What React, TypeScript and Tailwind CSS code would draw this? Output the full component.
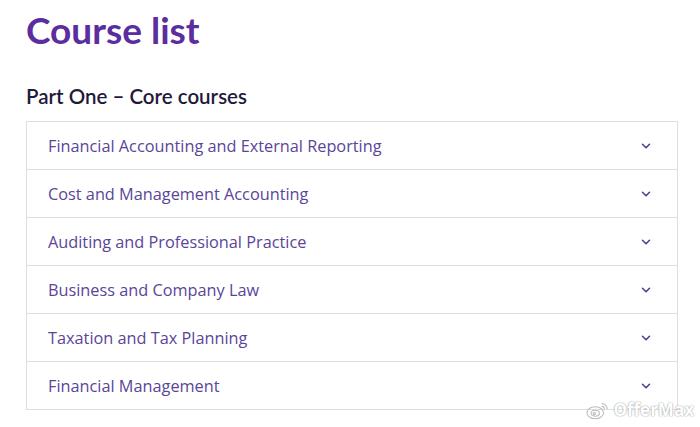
import { ChevronDown } from 'lucide-react'

const courses = [
  'Financial Accounting and External Reporting',
  'Cost and Management Accounting',
  'Auditing and Professional Practice',
  'Business and Company Law',
  'Taxation and Tax Planning',
  'Financial Management',
]

export default function App() {
  return (
    <div className="relative w-[700px] h-[427px] bg-white px-[26px] pt-[6px] font-['Lato',sans-serif] overflow-hidden">
      <h1 className="text-[37px] leading-[48px] font-bold text-[#5b2d9e]">Course list</h1>

      <h2 className="mt-[29px] text-[20.5px] leading-[26px] font-semibold text-[#1f1a3d]">
        Part One – Core courses
      </h2>

      <div className="mt-[12px] w-[652px] border-x border-t border-[#dedede]">
        {courses.map(c => (
          <div
            key={c}
            className="flex items-center justify-between h-[48px] pl-[21px] pr-[24px] pt-[1px] border-b border-[#dedede]"
          >
            <span className="text-[16.3px] text-[#5a4599] font-['Open_Sans',sans-serif]">{c}</span>
            <ChevronDown className="w-[14px] h-[14px] text-[#4b3591]" strokeWidth={2.5} />
          </div>
        ))}
      </div>

      {/* watermark */}
      <div className="absolute right-[6px] bottom-[7px] flex items-center gap-[3px]">
        <svg width="24" height="19" viewBox="0 0 26 20" fill="none" stroke="#bdbdbd" strokeWidth="1.2">
          <ellipse cx="10" cy="12.5" rx="9" ry="6.5" />
          <ellipse cx="10" cy="13" rx="4.5" ry="3.2" />
          <circle cx="9" cy="13.5" r="1.2" />
          <path d="M17 2.5a6 6 0 0 1 6 6" />
          <path d="M17 5.5a3 3 0 0 1 3 3" />
        </svg>
        <span className="text-[17px] leading-[20px] font-bold text-white font-['Open_Sans',sans-serif] [text-shadow:0_0_1px_#999,0_0_2px_#bbb]">OfferMax</span>
      </div>
    </div>
  )
}
